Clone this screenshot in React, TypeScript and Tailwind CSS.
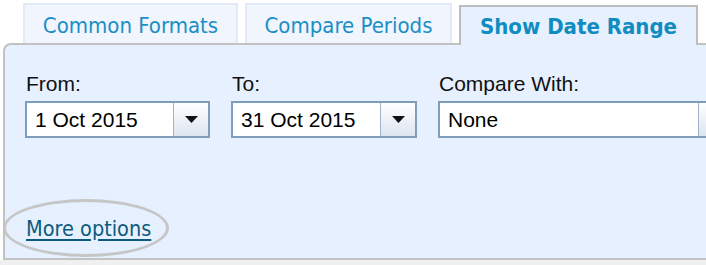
import React from "react";

// Date range picker panel with tabs

interface DateFieldProps {
  label: string;
  value: string;
  width: string;
}

function DropButton() {
  return (
    <div className="flex w-[35px] shrink-0 items-center justify-center border-l border-[#9fb4cb] bg-gradient-to-b from-[#ffffff] to-[#dde5ef]">
      <svg width="13" height="7" viewBox="0 0 13 7">
        <path d="M0 0 L13 0 L6.5 7 Z" fill="#111" />
      </svg>
    </div>
  );
}

function DateField({ label, value, width }: DateFieldProps) {
  return (
    <div className="flex flex-col">
      <label className="text-[21px] leading-[24px] text-[#111] pl-[1px] pt-[1px]">
        {label}
      </label>
      <div
        className={`mt-[5px] flex h-[37px] border-2 border-[#7e9cbb] bg-white ${width}`}
      >
        <div className="flex flex-1 items-center pl-[8px] pt-[1px] text-[21px] text-black">
          {value}
        </div>
        <DropButton />
      </div>
    </div>
  );
}

export default function App() {
  const tabs = [
    { name: "Common Formats", width: "w-[215px]" },
    { name: "Compare Periods", width: "w-[207px]" },
  ];

  return (
    <div
      className="relative h-[265px] w-[706px] overflow-hidden bg-white"
      style={{ fontFamily: '"Liberation Sans", Arial, sans-serif' }}
    >
      {/* Tabs */}
      <div
        className="relative z-10 flex h-[45px] items-start gap-[7px] pl-[23px] pt-[3px]"
        style={{ fontFamily: '"DejaVu Sans Condensed", "DejaVu Sans", sans-serif' }}
      >
        {tabs.map((t) => (
          <div
            key={t.name}
            className={`flex h-[40px] items-center justify-center border-2 border-b-0 border-[#e2eaf8] bg-[#f0f5fe] pt-[3px] text-[22px] text-[#1a8fc6] ${t.width}`}
          >
            {t.name}
          </div>
        ))}
        <div className="mt-[2px] flex h-[40px] w-[239px] items-center justify-center border-2 border-b-0 border-[#bdbdbd] bg-[#e6f0fe] pt-[1px] text-[22px] font-bold text-[#0f8cc2]">
          Show Date Range
        </div>
      </div>

      {/* Panel */}
      <div className="relative -mt-[2px] ml-[3px] h-[217px] w-[740px] rounded-tl-[8px] border-2 border-[#c2c2c2] bg-[#e6f0fe] px-[20px] pt-[26px]">
        <div className="flex gap-[21px]">
          <DateField label="From:" value="1 Oct 2015" width="w-[185px]" />
          <DateField label="To:" value="31 Oct 2015" width="w-[186px]" />
          <DateField label="Compare With:" value="None" width="w-[297px]" />
        </div>

        <div
          className="mt-[78px] pl-[1px] leading-[26px]"
          style={{ fontFamily: '"DejaVu Sans Condensed", "DejaVu Sans", sans-serif' }}
        >
          <a
            href="#"
            className="text-[21.5px] text-[#0b5b7c] underline underline-offset-[3px]"
          >
            More options
          </a>
        </div>
      </div>
      <div className="h-[10px] bg-[#f0f0f0]" />

      {/* highlight ring */}
      <div className="absolute left-[3px] top-[199px] h-[58px] w-[166px] rounded-[50%] border-[3px] border-[#c6c6c6]" />
    </div>
  );
}
